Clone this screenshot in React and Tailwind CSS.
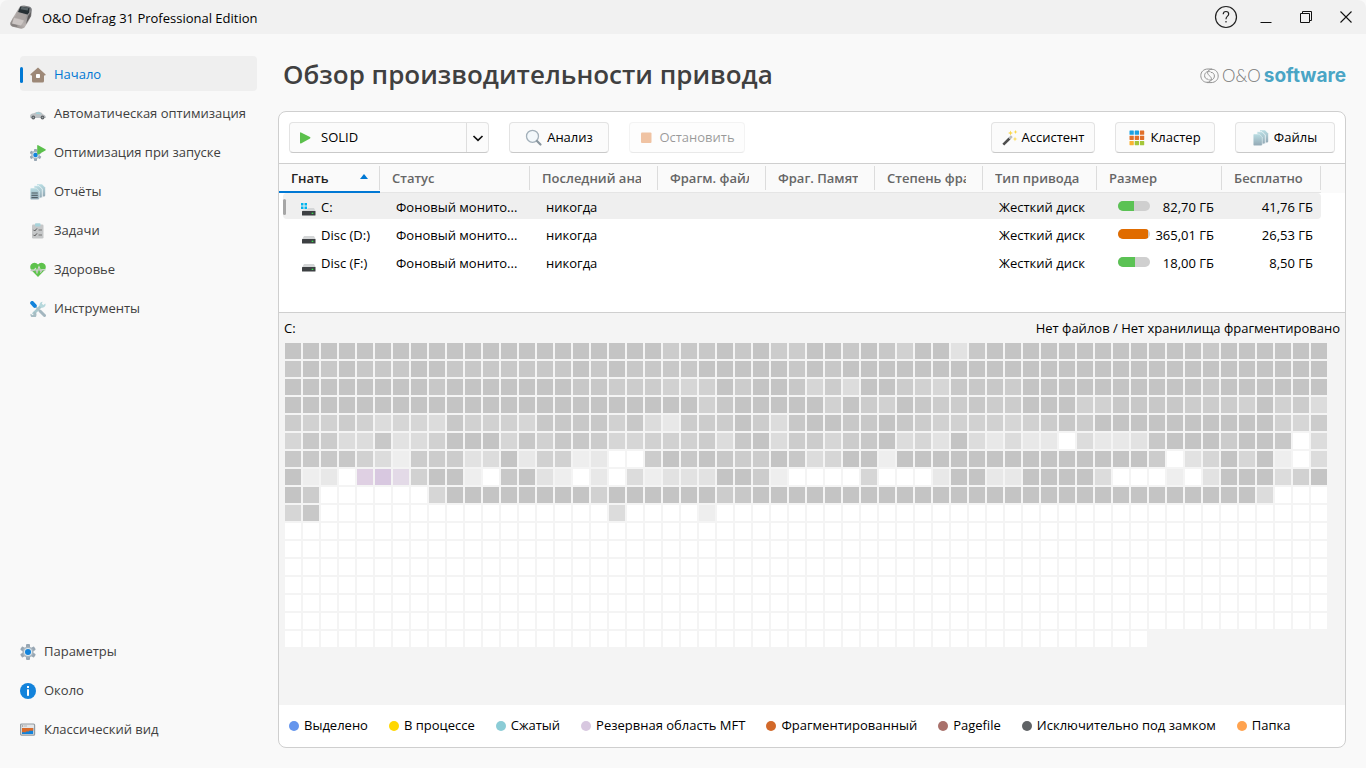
import { useState } from 'react';
import clsx from 'clsx';

/* ---------- Icons ---------- */

const AppIcon = () => (
  <svg width="24" height="26" viewBox="0 0 24 26" aria-hidden="true">
    <defs>
      <linearGradient id="carBody" x1="0" y1="1" x2="1" y2="0">
        <stop offset="0" stopColor="#7d7977" />
        <stop offset="0.4" stopColor="#b9b2b0" />
        <stop offset="1" stopColor="#6a6e72" />
      </linearGradient>
    </defs>
    <path d="M11 2.500 Q12 1.500 15 1.500 L20 2.500 Q23 3.500 22.800 6 L22.200 12 L19 18 L15.500 23.500 Q14 25 11 24.500 L3 22.500 Q.8 21.500 1.200 19 L3.500 14.500 L7.500 8 Z" fill="url(#carBody)" />
    <path d="M11.500 2.500 L20.500 4 L20 8.500 L18.500 10.500 L9 8 Z" fill="#252f33" />
    <path d="M12.500 2.800 L19.500 4 L18.700 6.500 L11.500 5.300 Z" fill="#596468" />
    <path d="M8.500 8.500 L18 11 L15.500 16 L5.500 13.500 Z" fill="#a9a3a1" />
    <path d="M5 14 L15 16.500 L12 21.500 L3 19.500 Z" fill="#ccc6c4" />
    <path d="M2.300 19.800 L8.500 21.300 L8 23 L3 22 Z" fill="#86817f" />
    <path d="M19 12 L22 8 L21.500 12.500 L17 20 Z" fill="#5a5858" />
  </svg>
);

const HomeIcon = () => (
  <svg width="16" height="16" viewBox="0 0 16 16" aria-hidden="true">
    <path d="M8 .6 L15.700 7.400 Q15.800 8.600 14.300 8.500 H14 V14 Q14 15.500 12.500 15.500 H3.500 Q2 15.500 2 14 V8.500 H1.300 Q.1 8.400 .4 7.300 Z" fill="#9d8877" />
    <rect x="6" y="7" width="4" height="4" rx=".8" fill="#fff" />
  </svg>
);

const CarIcon = () => (
  <svg width="16" height="16" viewBox="0 0 16 16" aria-hidden="true">
    <path d="M0 10 Q.5 7.500 4 7.300 Q6 5.600 9 5.800 Q11.500 6 13 8.200 Q15.500 8.800 15.800 10.800 V12 H.3 Z" fill="#bcc0c3" />
    <path d="M6 6.500 Q9 5.700 11.800 8.200 L6.300 8 Z" fill="#9fd0d8" />
    <circle cx="3.300" cy="11.500" r="1.900" fill="#5d6266" />
    <circle cx="12.500" cy="11.500" r="1.900" fill="#5d6266" />
    <circle cx="3.300" cy="11.500" r=".8" fill="#a4a8ab" />
    <circle cx="12.500" cy="11.500" r=".8" fill="#a4a8ab" />
  </svg>
);

const Gear = ({ cx, cy, r }) => (
  <g transform={`translate(${cx} ${cy}) scale(${r / 8})`}>
    {[0, 60, 120].map((a) => (
      <rect key={a} x="-2" y="-8" width="4" height="16" rx="1" transform={`rotate(${a})`} fill="#97a6b3" />
    ))}
    <circle r="5.600" fill="#a9b5be" />
    <circle r="4" fill="#dde8ef" />
    <circle r="3" fill="#1383db" />
  </g>
);

const StartupIcon = () => (
  <svg width="16" height="16" viewBox="0 0 16 16" aria-hidden="true">
    <Gear cx={5.500} cy={9.900} r={6} />
    <path d="M7.200 .6 Q7.300 -.2 8.200 .3 L15.400 4.300 Q16.200 4.900 15.400 5.500 L8.200 9.600 Q7.300 10 7.200 9.200 Z" fill="#5bc04c" />
  </svg>
);

const ReportsIcon = ({ lines = true }) => (
  <svg width="16" height="16" viewBox="0 0 16 16" aria-hidden="true">
    <defs>
      <linearGradient id="sheet" x1="0" y1="0" x2="0" y2="1">
        <stop offset="0" stopColor="#b9dde3" />
        <stop offset="1" stopColor="#93a8b4" />
      </linearGradient>
    </defs>
    <path d="M7 .3 H12 L15.200 3.500 V11.500 Q15.200 12.600 14 12.600 H7 Z" fill="url(#sheet)" />
    <path d="M4 1.700 H9 L12.300 5 V13 Q12.300 14 11 14 H4 Z" fill="url(#sheet)" stroke="#f4fafb" strokeWidth=".8" />
    <path d="M1.200 4 H6.200 L9.300 7 V14.600 Q9.300 15.700 8.200 15.700 H1.300 Q.2 15.700 .2 14.600 V5 Q.2 4 1.200 4 Z" fill="url(#sheet)" stroke="#f4fafb" strokeWidth=".5" />
    {lines && <path d="M1.500 9 H7.800 M1.500 11.300 H7.800 M1.500 13.600 H7.800" stroke="#4a565d" strokeWidth="1" />}
  </svg>
);

const TasksIcon = () => (
  <svg width="16" height="16" viewBox="0 0 16 16" aria-hidden="true">
    <rect x="2" y="1.500" width="11.500" height="14" rx="1.300" fill="#c5c7c8" />
    <rect x="5" y=".2" width="5.500" height="3.200" rx=".8" fill="#a9d3da" />
    <path d="M3.500 6.800 L4.700 8 L7 5.400 M3.500 11.800 L4.700 13 L7 10.400" fill="none" stroke="#555" strokeWidth="1" />
    <path d="M8.500 7 H12 M8.500 12 H12" stroke="#777" strokeWidth="1" />
  </svg>
);

const HealthIcon = () => (
  <svg width="16" height="16" viewBox="0 0 16 16" aria-hidden="true">
    <path d="M8 15 L1.200 8 Q-.7 5 1 2.500 Q3.200 -.2 6.500 1.200 L8 2.500 L9.500 1.200 Q12.800 -.2 15 2.500 Q16.700 5 14.800 8 Z" fill="#5ec24c" />
    <path d="M.6 8.300 H4 L5.500 6.800 L7 10.300 L9 5.200 L10.800 9.600 L12 7.600 H15.400" fill="none" stroke="#d9e6d6" strokeWidth="1.400" />
    <path d="M.6 8.700 H4 L5.500 7.300 L7 10.800 L9 5.800 L10.800 10 L12 8 H15.400" fill="none" stroke="#a9a9a9" strokeWidth=".6" />
  </svg>
);

const ToolsIcon = () => (
  <svg width="16" height="16" viewBox="0 0 16 16" aria-hidden="true">
    <path d="M3 13.200 L12.500 3.500" stroke="#a9c9ce" strokeWidth="2.800" />
    <path d="M15.300 2.600 A3 3 0 1 1 12.600 .7 L11.700 3.200 L13 4.300 Z" fill="#b6d8dc" />
    <path d="M.6 13.200 A3 3 0 1 0 3.200 10.600 L4.200 13 L3 14.200 Z" fill="#a7bcc3" transform="rotate(8 3 13)" />
    <path d="M5.500 5.500 L10.500 10.500" stroke="#aebfc5" strokeWidth="1.200" />
    <path d="M10 10 L14.500 14.500" stroke="#a3b6bf" strokeWidth="3" strokeLinecap="round" />
    <path d="M2.200 2 L4.800 4.800" stroke="#1383db" strokeWidth="4" strokeLinecap="round" />
  </svg>
);

const SettingsIcon = () => (
  <svg width="16" height="16" viewBox="0 0 16 16" aria-hidden="true">
    <Gear cx={8} cy={8} r={8} />
  </svg>
);

const InfoIcon = () => (
  <svg width="16" height="16" viewBox="0 0 16 16" aria-hidden="true">
    <circle cx="8" cy="8" r="8" fill="#1383db" />
    <rect x="7" y="6.300" width="2" height="6.500" fill="#fff" />
    <rect x="7" y="3" width="2" height="2" fill="#fff" />
  </svg>
);

const ClassicIcon = () => (
  <svg width="16" height="16" viewBox="0 0 16 16" aria-hidden="true">
    <rect x=".6" y="2" width="14" height="11.200" rx="1" fill="#e3e5e7" stroke="#939ba1" strokeWidth="1.200" />
    <path d="M2 4 H3.200" stroke="#555" strokeWidth=".8" />
    <path d="M4 4 H7" stroke="#aaa" strokeWidth=".8" />
    <rect x="2" y="6" width="11.200" height="6" fill="#1383db" />
    <path d="M2 6 H13.200 V8.700 H9 V9.500 H6 V10.300 H2 Z" fill="#d96b2b" />
  </svg>
);

const MagnifierIcon = () => (
  <svg width="18" height="18" viewBox="0 0 18 18" aria-hidden="true">
    <circle cx="7.500" cy="7.300" r="6" fill="#f3f8fb" stroke="#a3b0ba" strokeWidth="1.300" />
    <path d="M12 12 L15.500 15.500" stroke="#8a969f" strokeWidth="2.200" strokeLinecap="round" />
  </svg>
);

const WandIcon = () => (
  <svg width="16" height="16" viewBox="0 0 16 16" aria-hidden="true">
    <path d="M1.300 14.700 L7.500 8.500" stroke="#4d4d4d" strokeWidth="2.600" />
    <path d="M7.500 8.500 L9.800 6.200" stroke="#b9bcbe" strokeWidth="2.600" />
    <path d="M8.500 .5 L9.200 2.300 L11 3 L9.200 3.700 L8.500 5.500 L7.800 3.700 L6 3 L7.800 2.300 Z M13.500 -.1 L14.100 1.400 L15.600 2 L14.100 2.600 L13.500 4.100 L12.900 2.600 L11.400 2 L12.900 1.400 Z M13 6.500 L13.600 8.400 L15.500 9 L13.600 9.600 L13 11.500 L12.400 9.600 L10.500 9 L12.400 8.400 Z" fill="#fbd84b" />
  </svg>
);

const CLUSTER_COLORS = ['#1ba1e2', '#1ba1e2', '#e0702c', '#e0702c', '#e0702c', '#e0702c', '#f9b233', '#a4c639', '#a4c639'];

const ClusterIcon = () => (
  <svg width="16" height="16" viewBox="0 0 16 16" aria-hidden="true">
    {CLUSTER_COLORS.map((color, i) => (
      <rect key={i} x={0.500 + (i % 3) * 5.200} y={0.500 + Math.floor(i / 3) * 5.200} width="4.300" height="4.300" rx=".4" fill={color} />
    ))}
  </svg>
);

const DriveIcon = ({ system }) => (
  <svg width="17" height="16" viewBox="0 0 17 16" className="shrink-0" aria-hidden="true">
    <path d="M4 8 H14 L15.800 11.500 H2 Z" fill="#d4d6d7" />
    <rect x="2" y="11" width="13.500" height="4.500" rx=".5" fill="#3d4043" />
    <rect x="11.700" y="12.700" width="1.600" height="1.300" fill="#35e04b" />
    {system && (
      <>
        <rect x="0" y="2" width="7.500" height="7.500" fill="#efefef" />
        <path d="M1 3 H3.500 V5.500 H1 Z M4.500 3 H7 V5.500 H4.500 Z M1 6.500 H3.500 V9 H1 Z M4.500 6.500 H7 V9 H4.500 Z" fill="#00b4ee" />
      </>
    )}
  </svg>
);

const SPIRAL_ARM = 'M12 1 H8 C3.500 1 .8 4 .8 7.500 C.8 11.500 3.500 14.300 7 14.300 C9.700 14.300 11.400 12.900 11.400 10.800 C11.400 9.300 10.200 8.800 9.500 7.800 M10.600 3.900 C7.400 2.600 4.600 4.700 4.600 7.600 C4.600 9.700 6 11.200 8 11.200';

const SpiralLogo = () => (
  <svg width="19" height="16" viewBox="0 0 19 16" fill="none" stroke="#949494" strokeWidth="1" aria-hidden="true">
    <path d={SPIRAL_ARM} />
    <path d={SPIRAL_ARM} transform="rotate(180 9.500 7.800)" />
  </svg>
);

/* ---------- Data ---------- */

const NAV_ITEMS = [
  { id: 'home', label: 'Начало', Icon: HomeIcon },
  { id: 'auto', label: 'Автоматическая оптимизация', Icon: CarIcon },
  { id: 'startup', label: 'Оптимизация при запуске', Icon: StartupIcon },
  { id: 'reports', label: 'Отчёты', Icon: ReportsIcon },
  { id: 'tasks', label: 'Задачи', Icon: TasksIcon },
  { id: 'health', label: 'Здоровье', Icon: HealthIcon },
  { id: 'tools', label: 'Инструменты', Icon: ToolsIcon },
];

const FOOTER_ITEMS = [
  { id: 'settings', label: 'Параметры', Icon: SettingsIcon },
  { id: 'about', label: 'Около', Icon: InfoIcon },
  { id: 'classic', label: 'Классический вид', Icon: ClassicIcon },
];

const COLUMNS = [
  { label: 'Гнать', width: 'w-[101px]' },
  { label: 'Статус', width: 'w-[150px]' },
  { label: 'Последний ана', width: 'w-[128px]' },
  { label: 'Фрагм. файл', width: 'w-[108px]' },
  { label: 'Фраг. Памят', width: 'w-[109px]' },
  { label: 'Степень фра', width: 'w-[108px]' },
  { label: 'Тип привода', width: 'w-[114px]' },
  { label: 'Размер', width: 'w-[125px]' },
  { label: 'Бесплатно', width: 'w-[99px]' },
];

const DRIVES = [
  { name: 'C:', system: true, size: '82,70 ГБ', free: '41,76 ГБ', used: 50, bar: 'bg-[#5bc254]' },
  { name: 'Disc (D:)', size: '365,01 ГБ', free: '26,53 ГБ', used: 93, bar: 'bg-[#e06c00]' },
  { name: 'Disc (F:)', size: '18,00 ГБ', free: '8,50 ГБ', used: 53, bar: 'bg-[#5bc254]' },
];

const LEGEND = [
  { label: 'Выделено', color: 'bg-[#6495ed]' },
  { label: 'В процессе', color: 'bg-[#ffd700]' },
  { label: 'Сжатый', color: 'bg-[#8bccd6]' },
  { label: 'Резервная область MFT', color: 'bg-[#d8c8e0]' },
  { label: 'Фрагментированный', color: 'bg-[#d2692a]' },
  { label: 'Pagefile', color: 'bg-[#a9716b]' },
  { label: 'Исключительно под замком', color: 'bg-[#606366]' },
  { label: 'Папка', color: 'bg-[#ffa34f]' },
];

// 0 = full cluster ... 9 = free cluster, p/q/r = MFT zone
const CELL_COLORS = {
  0: 'bg-[#c4c4c4]',
  1: 'bg-[#c8c8c8]',
  2: 'bg-[#cccccc]',
  3: 'bg-[#d1d1d1]',
  4: 'bg-[#d6d6d6]',
  5: 'bg-[#dcdcdc]',
  6: 'bg-[#e2e2e2]',
  7: 'bg-[#e8e8e8]',
  8: 'bg-[#eeeeee]',
  9: 'bg-white',
  p: 'bg-[#dfd0e3]',
  q: 'bg-[#d8c8e0]',
  r: 'bg-[#e3dae7]',
};

const CLUSTERS = [
  '00000000000000000000' + '0211010220010130061' + '0000000000001000000',
  '10101110011111110101' + '1110000010100000000' + '0000000000000000000',
  '00000000100000001122' + '2343020014250023411' + '1200000000001000000',
  '00000000000000000000' + '0003100000302301221' + '2200033111122230325',
  '23323544513334111131' + '5722202510011012333' + '3432120000000000342',
  '41255165300041311244' + '3332510522421054605' + '7577957761000200195',
  '11113582226507338799' + '2010122015400800000' + '0000000002964040895',
  '0879pqr3008910689795' + '8666002899994999700' + '7700005999896000530',
  '02999999400000000300' + '0000210000000000000' + '0000000000000005999',
  '41999999999999999959' + '9998999999999999999' + '9999999999999999999',
].join('') + '9'.repeat(58 * 6 + 48);

/* ---------- Components ---------- */

function TitleBar() {
  return (
    <header className="flex h-[34px] shrink-0 items-center rounded-t-lg bg-[#f1f1f1] pr-3 pl-[9px]">
      <AppIcon />
      <span className="ml-[9px] flex-1 pt-[3px] text-[13px] text-black">O&amp;O Defrag 31 Professional Edition</span>
      <button type="button" aria-label="Справка" className="mr-5">
        <svg width="24" height="24" viewBox="0 0 24 24" fill="none" stroke="#222" strokeWidth="1.200">
          <circle cx="12" cy="12" r="10.500" />
          <path d="M9.200 9.300 Q9.300 6.500 12 6.500 Q14.700 6.500 14.700 9 Q14.700 10.300 13.300 11.400 Q12 12.400 12 14.200" />
          <path d="M12 16 V17.500" />
        </svg>
      </button>
      <button type="button" aria-label="Свернуть" className="mr-6">
        <svg width="16" height="16" viewBox="0 0 16 16" stroke="#111" strokeWidth="1"><path d="M2.500 13.500 H13.500" /></svg>
      </button>
      <button type="button" aria-label="Развернуть" className="mr-6">
        <svg width="16" height="16" viewBox="0 0 16 16" fill="none" stroke="#111" strokeWidth="1">
          <path d="M2.500 4.500 H11.500 V13.500 H2.500 Z M4.500 4 V2.500 H13.500 V11.500 H12" />
        </svg>
      </button>
      <button type="button" aria-label="Закрыть">
        <svg width="16" height="16" viewBox="0 0 16 16" stroke="#111" strokeWidth="1.100"><path d="M2.500 2.500 L13.500 13.500 M13.500 2.500 L2.500 13.500" /></svg>
      </button>
    </header>
  );
}

function Sidebar({ active, onSelect }) {
  return (
    <aside className="flex w-[278px] shrink-0 flex-col justify-between pt-[22px] pr-[21px] pb-[21px] pl-5 text-[13px] text-[#404040]">
      <nav className="flex flex-col gap-1">
        {NAV_ITEMS.map(({ id, label, Icon }) => (
          <button
            key={id}
            type="button"
            onClick={() => onSelect(id)}
            className={clsx('flex h-[35px] items-center rounded pt-[2px] text-left whitespace-nowrap', active === id && 'bg-[#efefef] text-[#0078d4]')}
          >
            <span className={clsx('mr-[7px] h-4 w-[3px] rounded-full', active === id && 'bg-[#0078d4]')} />
            <Icon />
            <span className="ml-2">{label}</span>
          </button>
        ))}
      </nav>
      <nav className="flex flex-col gap-1">
        {FOOTER_ITEMS.map(({ id, label, Icon }) => (
          <button key={id} type="button" className="flex h-[35px] items-center gap-2 text-left">
            <Icon />
            {label}
          </button>
        ))}
      </nav>
    </aside>
  );
}

function ToolButton({ children, className, ...props }) {
  return (
    <button
      type="button"
      className={clsx('flex h-[31px] items-center justify-center rounded border border-[#e3e3e3] border-b-[#c9c9c9] bg-[#fbfbfb] whitespace-nowrap', className)}
      {...props}
    >
      {children}
    </button>
  );
}

function Toolbar() {
  return (
    <div className="flex items-center gap-5 border-b border-[#cfcfcf] p-[10px] text-[13px] text-black">
      <div className="flex h-[31px] w-[200px] rounded border border-[#e3e3e3] border-b-[#c9c9c9] bg-[#fbfbfb]">
        <button type="button" className="flex flex-1 items-center gap-2 pl-2">
          <svg width="15" height="14" viewBox="0 0 15 14" aria-hidden="true">
            <path d="M2 2 Q2 1 3 1.400 L12 6 Q13 6.700 12 7.400 L3 12.400 Q2 12.800 2 11.800 Z" fill="#5bc04c" />
          </svg>
          SOLID
        </button>
        <button type="button" aria-label="Выбрать метод" className="flex w-[22px] items-center justify-center border-l border-[#dedede]">
          <svg width="12" height="8" viewBox="0 0 12 8" fill="none" stroke="#111" strokeWidth="1.700"><path d="M1.500 2 L6 6.300 L10.500 2" /></svg>
        </button>
      </div>
      <ToolButton className="w-[100px] gap-1">
        <MagnifierIcon />
        Анализ
      </ToolButton>
      <ToolButton disabled className="w-[116px] gap-1 opacity-40">
        <svg width="16" height="16" viewBox="0 0 16 16" aria-hidden="true"><rect x="2" y="2.500" width="10.500" height="10.500" rx="1" fill="#dc6a1c" /></svg>
        Остановить
      </ToolButton>
      <div className="flex-1" />
      <ToolButton className="w-[104px] gap-1">
        <WandIcon />
        Ассистент
      </ToolButton>
      <ToolButton className="w-[100px] gap-[5px]">
        <ClusterIcon />
        Кластер
      </ToolButton>
      <ToolButton className="w-[100px] gap-[5px]">
        <ReportsIcon lines={false} />
        Файлы
      </ToolButton>
    </div>
  );
}

function DriveTable() {
  const [selected, setSelected] = useState('C:');

  return (
    <table className="w-full table-fixed border-separate border-spacing-0 text-[13px] text-black">
      <thead>
        <tr className="bg-[#fafafa]">
          {COLUMNS.map(({ label, width }, i) => (
            <th
              key={label}
              className={clsx(
                'h-[29px] p-0 text-left font-semibold',
                width,
                i === 0 ? 'border-b-2 border-[#0078d4] text-[#222]' : 'border-b border-[#e5e5e5] text-[#666]'
              )}
            >
              <div className="flex h-6 items-center border-r border-[#dcdcdc] pt-[2px] pr-4 pl-3">
                <span className="flex-1 overflow-hidden whitespace-nowrap">{label}</span>
                {i === 0 && (
                  <svg width="8" height="5" viewBox="0 0 8 5" className="-mr-[5px] mb-1" aria-hidden="true"><path d="M4 0 L8 5 H0 Z" fill="#0078d4" /></svg>
                )}
              </div>
            </th>
          ))}
          <th className="p-0" aria-label="Прочее" />
        </tr>
      </thead>
      <tbody>
        {DRIVES.map((drive) => {
          const cell = clsx('flex h-[26px] items-center pt-[3px] whitespace-nowrap', selected === drive.name && 'bg-[#efefef]');
          return (
            <tr key={drive.name} className="align-top" onClick={() => setSelected(drive.name)}>
              <td className="h-7 p-0">
                <div className={clsx(cell, 'ml-1 rounded-l')}>
                  <span className={clsx('mr-[14px] mb-[2px] h-4 w-[3px] rounded-full', selected === drive.name && 'bg-[#a6a6a6]')} />
                  <DriveIcon system={drive.system} />
                  <span className="ml-1">{drive.name}</span>
                </div>
              </td>
              <td className="p-0">
                <div className={clsx(cell, 'pl-4')}>Фоновый монито...</div>
              </td>
              <td className="p-0"><div className={clsx(cell, 'pl-4')}>никогда</div></td>
              <td className="p-0"><div className={cell} /></td>
              <td className="p-0"><div className={cell} /></td>
              <td className="p-0"><div className={cell} /></td>
              <td className="p-0"><div className={clsx(cell, 'pl-4')}>Жесткий диск</div></td>
              <td className="p-0">
                <div className={clsx(cell, 'justify-between pr-2 pl-[21px]')}>
                  <div className="mb-[3px] h-[10px] w-8 overflow-hidden rounded-full bg-[#cfcfcf]">
                    <div className={clsx('h-full', drive.bar)} style={{ width: `${drive.used}%` }} />
                  </div>
                  {drive.size}
                </div>
              </td>
              <td className="p-0"><div className={clsx(cell, 'justify-end rounded-r pr-2')}>{drive.free}</div></td>
              <td className="p-0" />
            </tr>
          );
        })}
      </tbody>
    </table>
  );
}

function ClusterMap() {
  return (
    <section className="flex-1 border-t border-[#cfcfcf] bg-[#f4f4f4] pb-4 text-[13px] text-black">
      <div className="flex h-[30px] items-center justify-between px-[5px] pt-[2px]">
        <span>C:</span>
        <span>Нет файлов / Нет хранилища фрагментировано</span>
      </div>
      <div className="flex flex-wrap gap-[2px] pr-4 pl-[6px]">
        {CLUSTERS.split('').map((level, i) => (
          <div key={i} className={clsx('h-4 w-4', CELL_COLORS[level])} />
        ))}
      </div>
    </section>
  );
}

function App() {
  const [page, setPage] = useState('home');

  return (
    <div className="flex min-h-screen flex-col bg-[#f9f9f9] font-['Open_Sans','Noto_Sans',sans-serif]">
      <TitleBar />
      <div className="flex flex-1">
        <Sidebar active={page} onSelect={setPage} />
        <main className="flex min-w-0 flex-1 flex-col pr-5 pb-5">
          <div className="flex h-[77px] items-center justify-between pt-[4px] pl-[5px]">
            <h1 className="text-[26px] font-semibold text-[#404040]">Обзор производительности привода</h1>
            <div className="flex items-center pt-[2px]">
              <SpiralLogo />
              <span className="ml-[3px] font-['Lato',sans-serif] text-[17px] font-light text-[#777]">O&amp;O</span>
              <span className="ml-[3px] font-['Inter',sans-serif] text-[19px] leading-6 font-bold text-[#4aa5c5]">software</span>
            </div>
          </div>
          <div className="flex flex-1 flex-col overflow-hidden rounded-lg border border-[#cfcfcf] bg-white">
            <Toolbar />
            <div className="h-[148px]">
              <DriveTable />
            </div>
            <ClusterMap />
            <ul className="flex h-[42px] items-center gap-[21px] px-[10px] text-[13px] whitespace-nowrap text-black">
              {LEGEND.map(({ label, color }) => (
                <li key={label} className="flex items-center gap-[5px]">
                  <span className={clsx('h-[10px] w-[10px] rounded-full', color)} />
                  {label}
                </li>
              ))}
            </ul>
          </div>
        </main>
      </div>
    </div>
  );
}

export default App;
